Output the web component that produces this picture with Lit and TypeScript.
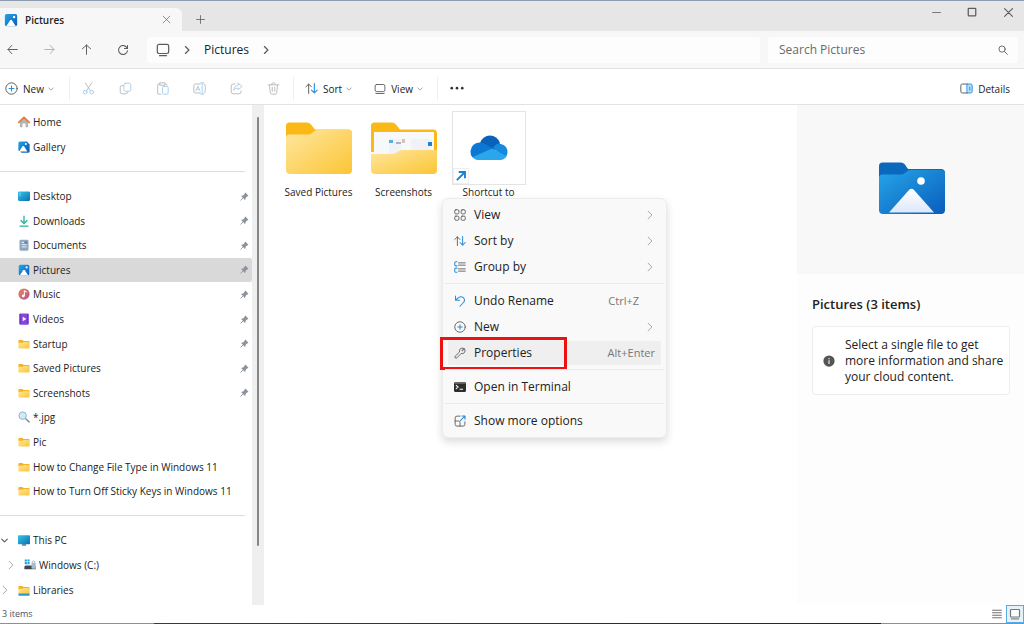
import { LitElement, html, css, svg, nothing, TemplateResult } from "lit";
import { customElement, state } from "lit/decorators.js";
import { classMap } from "lit/directives/class-map.js";

const icon = (size: number, body: unknown, box = 16) => html`
  <svg class="icon" width=${size} height=${size} viewBox="0 0 ${box} ${box}" aria-hidden="true">${body}</svg>`;

const line = (d: string, cls = "ink") => svg`<path class=${cls} d=${d} />`;

const chevronRight = icon(10, line("M5.500 2.500 L11 8 L5.500 13.500", "ink bold"));
const chevronThin = icon(10, line("M5 2 L11 8 L5 14", "soft"));
const chevronDown = icon(6, line("M2 5 L8 11 L14 5", "soft bold"));
const sortGlyph = svg`${line("M4.500 14 V2.500 M1 6 L4.500 2.500 L8 6", "ink")}${line("M11.500 2 V13.500 M8 10 L11.500 13.500 L15 10", "blue thick")}`;
const plusCircle = svg`<circle class="ink" cx="8" cy="8" r="7" />${line("M8 5 V11 M5 8 H11", "blue thick")}`;

const pictureGlyph = svg`
  <rect x="1" y="1" width="14" height="14" rx="2" fill="url(#sky)" />
  <path d="M2.500 15 L7 8.200 Q8 7 9 8.200 L13.500 15 Z" fill="#fff" />
  <circle cx="11.500" cy="4.500" r="1.400" fill="#fff" />`;

const folderGlyph = svg`
  <path d="M0.500 4 Q0.500 2.500 2 2.500 H6 L7.500 4 H14 Q15.500 4 15.500 5.500 V7 H0.500 Z" fill="#f5b21c" />
  <path d="M0.500 6.200 H6 L7.500 5.200 H14.200 Q15.500 5.200 15.500 6.500 V12.700 Q15.500 14 14.200 14 H1.800 Q0.500 14 0.500 12.700 Z" fill="url(#sun)" />`;

const glyphs: Record<string, TemplateResult> = {
  home: svg`
    <path d="M2.500 7 L8 2.500 L13.500 7 V15 H10 V10 H6 V15 H2.500 Z" fill="#b3b6ba" />
    <path d="M1 8.500 L8 1.800 L15 8.500" fill="none" stroke="#e8792e" stroke-width="2.200" stroke-linejoin="round" stroke-linecap="round" />`,
  gallery: svg`
    <rect x="3.500" y="3" width="12" height="12.500" rx="2" fill="#1467b8" />
    <rect x="0.500" y="0.500" width="13" height="13" rx="2" fill="url(#sky)" />
    <path d="M1.500 14 L6 7 Q7 6 8 7 L12.500 14 Z" fill="#fff" />
    <circle cx="10.500" cy="4" r="1.300" fill="#fff" />`,
  desktop: svg`
    <rect x="0" y="2" width="16" height="12.500" rx="1.500" fill="url(#teal)" />
    <path d="M2 4.500 h1.500 M2 7 h1.500" stroke="#b8f1ff" stroke-width="1.200" />`,
  downloads: svg`<path d="M8 1 V11 M3.500 7 L8 11.300 L12.500 7 M2 14.800 H14" fill="none" stroke="#2eb398" stroke-width="1.800" />`,
  documents: svg`
    <rect x="2" y="1" width="12" height="14.500" rx="1.500" fill="#8fa6c1" />
    <path d="M5 4.500 H8 M5 7.500 H11.500 M5 10.500 H11.500" stroke="#eaf2fb" stroke-width="1.300" />
    <rect x="9" y="3.500" width="3" height="2.500" fill="#54769f" />`,
  pictures: pictureGlyph,
  music: svg`
    <circle cx="8" cy="8" r="7.500" fill="url(#rose)" />
    <path d="M8.500 10.500 V3.800 L11.500 5.300" fill="none" stroke="#fff" stroke-width="1.400" />
    <circle cx="7" cy="10.700" r="1.900" fill="#fff" />`,
  videos: svg`
    <rect x="1.500" y="0.500" width="13" height="15" rx="1.500" fill="#8748d8" />
    <path d="M3.500 2 V14.500 M12.700 2 V14.500" stroke="#5a22a8" stroke-width="1.300" stroke-dasharray="1.500 1.500" />
    <path d="M6.300 5 L11 8 L6.300 11 Z" fill="#fff" />`,
  folder: folderGlyph,
  search: svg`
    <path d="M10 10 L14.800 14.500" stroke="#8a8f96" stroke-width="2" stroke-linecap="round" />
    <circle cx="6.200" cy="6.200" r="5" fill="#cfe9fa" stroke="#8db4d0" stroke-width="1.300" />`,
  pc: svg`
    <path d="M5 15.500 H11 L10 13 H6 Z" fill="#6b7f92" />
    <rect x="0" y="1.500" width="16" height="12" rx="1" fill="url(#teal)" />`,
  drive: svg`
    <path d="M1 0.500 h2.800 v2.800 h-2.800 Z M4.600 0.500 h2.800 v2.800 h-2.800 Z M1 4.100 h2.800 v2.800 h-2.800 Z M4.600 4.100 h2.800 v2.800 h-2.800 Z" fill="#1ba0ea" />
    <path d="M2 8.500 H14 L15.500 10 V13.500 H0.500 V10 Z" fill="#42474d" />
    <rect x="10" y="5" width="5.500" height="8" rx="1" fill="#a9bccb" />
    <path d="M11 5 V3.500 Q12.700 1.500 14.400 3.500 V5" fill="none" stroke="#8ba0b1" />`,
  libraries: svg`${folderGlyph}<rect x="0.500" y="12.500" width="15" height="3" rx="1" fill="#2f9bc4" />`,
};

const pin = icon(9, svg`
  <path d="M9.500 1 L15 6.500 L13.500 8 L12.800 7.600 L9.800 10.600 Q10.300 13 8.800 14 L2 7.200 Q3.500 5.700 5.600 6.200 L8.400 3.300 L8 2.500 Z" fill="#8a929b" />
  <path d="M5.500 10.500 L1 15" stroke="#8a929b" stroke-width="1.600" />`);

interface Place {
  label: string;
  glyph: string;
  pinned?: boolean;
  arrow?: "open" | "closed";
  nested?: boolean;
}

const places: (Place | null)[] = [
  { label: "Home", glyph: "home" },
  { label: "Gallery", glyph: "gallery" },
  null,
  { label: "Desktop", glyph: "desktop", pinned: true },
  { label: "Downloads", glyph: "downloads", pinned: true },
  { label: "Documents", glyph: "documents", pinned: true },
  { label: "Pictures", glyph: "pictures", pinned: true },
  { label: "Music", glyph: "music", pinned: true },
  { label: "Videos", glyph: "videos", pinned: true },
  { label: "Startup", glyph: "folder", pinned: true },
  { label: "Saved Pictures", glyph: "folder", pinned: true },
  { label: "Screenshots", glyph: "folder", pinned: true },
  { label: "*.jpg", glyph: "search" },
  { label: "Pic", glyph: "folder" },
  { label: "How to Change File Type in Windows 11", glyph: "folder" },
  { label: "How to Turn Off Sticky Keys in Windows 11", glyph: "folder" },
  null,
  { label: "This PC", glyph: "pc", arrow: "open" },
  { label: "Windows (C:)", glyph: "drive", arrow: "closed", nested: true },
  { label: "Libraries", glyph: "libraries", arrow: "closed" },
];

interface Command {
  label: string;
  glyph: TemplateResult;
  keys?: string;
  submenu?: boolean;
  marked?: boolean;
}

const commands: (Command | null)[] = [
  {
    label: "View", submenu: true,
    glyph: svg`<g class="ink"><rect x="1" y="1" width="5.500" height="5.500" rx="1.500" /><rect x="9.500" y="1" width="5.500" height="5.500" rx="1.500" /><rect x="1" y="9.500" width="5.500" height="5.500" rx="1.500" /><rect x="9.500" y="9.500" width="5.500" height="5.500" rx="1.500" /></g>`,
  },
  { label: "Sort by", submenu: true, glyph: sortGlyph },
  {
    label: "Group by", submenu: true,
    glyph: svg`${line("M4 1 H2.500 Q1 1 1 2.500 V5 Q1 6.500 2.500 6.500 H4 M4 9.500 H2.500 Q1 9.500 1 11 V13.500 Q1 15 2.500 15 H4", "blue thick")}${line("M6 2.500 H15 M6 5.500 H15 M6 10.500 H15 M6 13.500 H15")}`,
  },
  null,
  { label: "Undo Rename", keys: "Ctrl+Z", glyph: line("M2 1.500 V7 H7.500 M2 7 L6 3.500 Q9.500 1 12.500 3.500 Q15.500 7 12.500 10 L8 15", "blue thick") },
  { label: "New", submenu: true, glyph: plusCircle },
  {
    label: "Properties", keys: "Alt+Enter", marked: true,
    glyph: line("M13.800 2.600 L11 5.300 L10.700 5.200 L10.500 4.900 L13.200 2 Q10.500 0.500 8.300 2.500 Q6.600 4.300 7.400 6.700 L1.600 12.200 Q0.600 13.400 1.600 14.500 Q2.700 15.400 3.900 14.400 L9.400 8.700 Q12 9.400 13.800 7.600 Q15.500 5.500 14.300 3 Z"),
  },
  null,
  {
    label: "Open in Terminal",
    glyph: svg`<rect x="0" y="1.500" width="16" height="13" rx="1.500" fill="#2e2e2e" /><path d="M2.500 5.500 L5.500 8 L2.500 10.500 M7.500 11 H12" fill="none" stroke="#fff" stroke-width="1.400" /><path d="M1 3 H15" stroke="#8b8b8b" />`,
  },
  null,
  {
    label: "Show more options",
    glyph: svg`${line("M8 1.500 H4 Q1.500 1.500 1.500 4 V12.500 Q1.500 14.800 4 14.800 H12 Q14.500 14.800 14.500 12.500 V9 M1.500 8 H6 Q8 8 8 10 V14.800")}${line("M8.500 7.500 L14.500 1.500 M10.500 1.300 H14.700 V5.500", "blue thick")}`,
  },
];

const fileTools: [string, TemplateResult][] = [
  ["Cut", svg`${line("M4 1 L10.500 11 M12 1 L5.500 11")}<g class="blue"><circle cx="4" cy="12.500" r="2.300" /><circle cx="12" cy="12.500" r="2.300" /></g>`],
  ["Copy", svg`${line("M5 4.500 H3.500 Q1.500 4.500 1.500 6.500 V12.500 Q1.500 14.500 3.500 14.500 H8.500 Q10.500 14.500 10.500 12.500")}<rect class="blue" x="6" y="1.500" width="8.500" height="10" rx="2" />`],
  ["Paste", svg`${line("M5 2.500 H3.500 Q2 2.500 2 4 V13.500 Q2 15 3.500 15 H6 M11 2.500 H12 Q13.500 2.500 13.500 4 M5 1 H11 V4 H5 Z")}<rect class="blue" x="8" y="5.500" width="7" height="9.500" rx="1.500" />`],
  ["Rename", svg`${line("M9 2.500 H3 Q1 2.500 1 4.500 V11.500 Q1 13.500 3 13.500 H9 M13.500 2.500 Q15 2.800 15 4.500 V11.500 Q15 13.200 13.500 13.500")}${line("M3.500 11 L6 5 L8.500 11 M4.500 9 H7.500 M11.300 1 V15 M9.500 1 H13 M9.500 15 H13", "blue")}`],
  ["Share", svg`${line("M6 2.500 H4 Q1.500 2.500 1.500 5 V12 Q1.500 14.500 4 14.500 H11 Q13.500 14.500 13.500 12 V11")}${line("M10 1.500 L15 5.500 L10 9.500 V7.300 Q6 7.300 4.500 10.500 Q4.800 4.500 10 3.800 Z", "blue")}`],
  ["Delete", svg`${line("M1.500 3.500 H14.500 M5.500 3 Q5.500 1 8 1 Q10.500 1 10.500 3 M3 3.500 L4 13 Q4.200 15 6 15 H10 Q11.800 15 12 13 L13 3.500 M6.500 6.500 V11.500 M9.500 6.500 V11.500")}`],
];

const bigFolder = (thumbnail: boolean) => html`
  <svg width="66" height="52" viewBox="0 0 66 52" aria-hidden="true">
    <path d="M0 4 Q0 0.500 3.500 0.500 H21 Q23 0.500 24.500 2 L29 7.500 H62 Q66 7.500 66 11.500 V30 H0 Z" fill="#fbb917" />
    ${thumbnail
      ? svg`
        <rect x="3" y="10" width="60" height="28" fill="#f7f8fa" />
        <path d="M18 17 H30 V34 H18 Z M40 17 H60 V28 H40 Z" fill="#f0f2f5" />
        <rect x="18" y="18" width="4" height="3" fill="#5aabe2" /><rect x="25" y="20" width="5" height="2" fill="#a4b4c6" />
        <rect x="31" y="17" width="3" height="4" fill="#e2bdb3" /><rect x="57" y="20" width="4" height="4" fill="#1b84d8" />
        <path d="M0 32 H21 Q23 32 25 31 L28 29 Q30 28 32 28 H66 V48 Q66 52 62 52 H4 Q0 52 0 48 Z" fill="url(#sun)" />`
      : svg`<path d="M0 16 Q0 12.500 3.500 12.500 H22 Q24 12.500 26 11 L28.500 9 Q30 8 32 8 H62 Q66 8 66 12 V48 Q66 52 62 52 H4 Q0 52 0 48 Z" fill="url(#sun)" />`}
  </svg>`;

const shortcutThumb = html`
  <span class="thumb">
    <svg width="38" height="26" viewBox="0 0 38 26" aria-hidden="true">
      <path d="M10 8 Q13 0.500 20 0.500 Q27 0.500 30 8 L24 17 L8 13 Z" fill="#0a61b8" />
      <path d="M9 25 Q0 24 0.500 16 Q1.500 8 9.500 7.500 Q14 7.500 17 10 L26 15 L9 25 Z" fill="#0d78d4" />
      <path d="M23 13 Q26 7.500 31 9 Q38 11 37.500 18 Q37 21 35 23 Z" fill="#1789dc" />
      <path d="M3 22 L22 13.500 L36.500 21 Q34.500 25 30 25 H9 Q5 25 3 22 Z" fill="#2aa7ec" />
    </svg>
    <span class="badge">${icon(12, svg`<path d="M2.500 13.500 L12 4 M5 2.700 H13.300 V11" fill="none" stroke="#1283d6" stroke-width="2.500" />`)}</span>
  </span>`;

const files = [
  { label: "Saved Pictures", art: bigFolder(false) },
  { label: "Screenshots", art: bigFolder(true) },
  { label: "Shortcut to", art: shortcutThumb },
];

@customElement("app-root")
export class AppRoot extends LitElement {
  @state() private selected = "Pictures";

  static styles = css`
    :host {
      display: flex;
      flex-direction: column;
      min-height: 100vh;
      box-sizing: border-box;
      border-top: 1px solid #8d9db0;
      background: #fff;
      color: #222;
      font: 10px/16px "Open Sans", "Noto Sans", sans-serif;
    }
    * { box-sizing: border-box; }
    button, input {
      font: inherit;
      color: inherit;
      background: none;
      border: 0;
      padding: 0;
      margin: 0;
    }
    button { display: flex; align-items: center; justify-content: center; white-space: nowrap; }
    a { color: inherit; text-decoration: none; }
    h2, p, ul { margin: 0; padding: 0; list-style: none; }
    svg { display: block; flex: none; }
    .defs { position: absolute; }
    .ink, .soft, .blue { fill: none; stroke-linecap: round; stroke-linejoin: round; stroke-width: 1.200; }
    .ink { stroke: #5c5c5c; }
    .soft { stroke: #8a8a8a; }
    .blue { stroke: #2a8fdc; }
    .thick { stroke-width: 1.400; }
    .bold { stroke-width: 2; }

    .titlebar { display: flex; height: 30px; background: #e6e6e6; }
    .tab {
      display: flex;
      align-items: center;
      width: 182px;
      margin-top: 7px;
      padding: 0 10px 0 4px;
      gap: 7px;
      background: #f7f7f7;
      border-radius: 0 6px 0 0;
      font-weight: 600;
    }
    .tab span { flex: 1; }
    .tab button { width: 12px; height: 16px; }
    .newtab { width: 36px; margin-top: 7px; }
    .window { display: flex; gap: 4px; margin-left: auto; }
    .window button { width: 32px; height: 22px; }

    .navbar {
      display: flex;
      align-items: center;
      height: 38px;
      padding-right: 6px;
      background: #f7f7f7;
      border-bottom: 1px solid #e3e3e3;
      font-size: 12px;
    }
    .moves { display: flex; gap: 13px; width: 147px; }
    .moves button { width: 24px; height: 24px; }
    .moves button:disabled { opacity: 0.45; }
    .address, .search { display: flex; align-items: center; height: 26px; background: #fdfdfd; border-radius: 3px; }
    .address { flex: 1; gap: 12px; padding-left: 9px; }
    .search { width: 250px; margin-left: 8px; padding: 0 10px 0 11px; }
    .search input { flex: 1; min-width: 0; outline: 0; }
    .search input::placeholder { color: #6a6a6a; opacity: 1; }

    .toolbar {
      display: flex;
      align-items: center;
      height: 36px;
      padding: 4px 14px 0 5px;
      background: #fff;
      border-bottom: 1px solid #e3e3e3;
    }
    .toolbar .drop { gap: 5px; height: 24px; }
    .toolbar .drop .icon:last-child { margin-left: -1px; }
    .rule { width: 1px; height: 24px; background: #f0f0f0; }
    .tools { display: flex; flex: none; gap: 13px; margin: 0 8px 0 6px; opacity: 0.4; }
    .tools button { width: 24px; height: 24px; }
    .drops { display: flex; gap: 22px; margin: 0 14px 0 11px; }
    .first { width: 64px; justify-content: flex-start; }
    .more { width: 38px; height: 24px; }
    .details { gap: 5px; margin-left: auto; }

    .body { display: flex; flex: 1; min-height: 0; }
    .side { display: flex; flex: none; width: 264px; }
    .places {
      display: grid;
      flex: 1;
      grid-auto-rows: minmax(24px, 1fr);
      padding: 5px 0 3px;
    }
    .places li { display: grid; min-width: 0; }
    .places a { display: flex; align-items: center; gap: 3px; padding: 0 3px 0 0; white-space: nowrap; border-radius: 0 2px 2px 0; }
    .places .selected { background: #d9d9d9; }
    .places .name { flex: 1; }
    .arrow { display: flex; width: 15px; }
    .nested .arrow { width: 21px; padding-left: 6px; }
    .places .divider { align-self: center; height: 1px; margin-right: 7px; background: #dedede; }
    .track { display: flex; justify-content: center; width: 12px; padding-top: 12px; background: #efefef; }
    .thumbbar { width: 2px; height: 88%; background: #868686; border-radius: 1px; }

    .content { position: relative; flex: 1; min-width: 0; }
    .files { display: flex; flex-wrap: wrap; padding: 6px 0 0 12px; }
    .file { display: flex; flex-direction: column; align-items: center; width: 85px; }
    .art { display: flex; align-items: center; justify-content: center; height: 73px; }
    .thumb {
      position: relative;
      display: flex;
      align-items: center;
      justify-content: center;
      width: 74px;
      height: 74px;
      border: 1px solid #e4e4e4;
    }
    .badge { position: absolute; left: 0; bottom: 0; padding: 1px; background: #fff; border: 1px solid #eee; }

    .menu {
      position: absolute;
      left: 178px;
      top: 93px;
      width: 225px;
      padding: 3px 4px;
      background: #f9f9f9;
      border: 1px solid #ececec;
      border-radius: 6px;
      box-shadow: 0 4px 8px rgba(0, 0, 0, 0.14);
      font-size: 12px;
    }
    .menu li { position: relative; }
    .menu .cut { height: 8px; padding-top: 3px; }
    .menu .cut::after { content: ""; display: block; height: 1px; margin: 0 -2px; background: #ebebeb; }
    .command { width: 100%; height: 26px; padding: 0 6px; gap: 8px; border: 1px solid transparent; border-radius: 3px; background-clip: padding-box; }
    .command .name { flex: 1; text-align: left; }
    .command.marked { background-color: #efefef; }
    .keys { font-size: 11px; color: #777; }
    .keys.short { margin-right: 16px; }
    .frame { position: absolute; left: -7px; top: -3px; width: 127px; height: 33px; border: 3px solid #ee1111; pointer-events: none; }

    .pane { flex: none; width: 227px; background: #fdfdfd; }
    .preview { display: flex; align-items: center; justify-content: center; height: 169px; padding: 0 0 4px 2px; background: #f8f8f8; }
    .pane h2 { padding: 21px 15px 0; font-size: 13px; line-height: 18px; font-weight: 600; }
    .card {
      display: flex;
      align-items: center;
      gap: 10px;
      margin: 13px 14px 0 15px;
      padding: 10px 3px 9px 10px;
      border: 1px solid #ededed;
      border-radius: 4px;
      background: #fff;
      font-size: 12px;
    }

    .status {
      display: flex;
      align-items: center;
      height: 19px;
      padding: 0 0 1px 2px;
      background: linear-gradient(90deg, #8590a3 15%, #1b3f7a 15%, #1b2450 86%, #8590a3 86%) bottom / 100% 1px no-repeat;
      color: #44546c;
      font-size: 9px;
    }
    .modes { display: flex; margin-left: auto; }
    .modes button { width: 18px; height: 18px; }
    .modes .on { background: #e5f2fb; border: 1px solid #5aaae4; }
  `;

  private place(item: Place | null) {
    if (!item) return html`<li class="divider" role="separator"></li>`;
    const active = item.label === this.selected;
    return html`
      <li>
        <a href="#" class=${classMap({ selected: active, nested: !!item.nested })}
          aria-current=${active ? "page" : nothing}
          @click=${(e: Event) => { e.preventDefault(); this.selected = item.label; }}>
          <span class="arrow">${item.arrow === "open"
            ? icon(9, line("M3 5.500 L8 10.500 L13 5.500", "ink bold"))
            : item.arrow ? chevronThin : nothing}</span>
          ${icon(12, glyphs[item.glyph])}
          <span class="name">${item.label}</span>
          ${item.pinned ? pin : nothing}
        </a>
      </li>`;
  }

  private command(item: Command | null) {
    if (!item) return html`<li class="cut" role="separator"></li>`;
    return html`
      <li role="none">
        <button role="menuitem" class=${classMap({ command: true, marked: !!item.marked })}>
          ${icon(12, item.glyph)}
          <span class="name">${item.label}</span>
          ${item.keys ? html`<span class=${classMap({ keys: true, short: !item.marked })}>${item.keys}</span>` : nothing}
          ${item.submenu ? chevronThin : nothing}
        </button>
        ${item.marked ? html`<span class="frame"></span>` : nothing}
      </li>`;
  }

  render() {
    return html`
      <svg class="defs" width="0" height="0" aria-hidden="true">
        <linearGradient id="sky" x1="0" y1="0" x2="1" y2="1"><stop offset="0" stop-color="#25a5e8" /><stop offset="1" stop-color="#0a5dbb" /></linearGradient>
        <linearGradient id="sun" x1="0" y1="0" x2="1" y2="1"><stop offset="0" stop-color="#ffe7a0" /><stop offset="1" stop-color="#fbc534" /></linearGradient>
        <linearGradient id="teal" x1="0" y1="0" x2="1" y2="1"><stop offset="0" stop-color="#36c5e4" /><stop offset="1" stop-color="#0b6fb5" /></linearGradient>
        <linearGradient id="rose" x1="0" y1="0" x2="1" y2="1"><stop offset="0" stop-color="#f08350" /><stop offset="1" stop-color="#b2568f" /></linearGradient>
        <linearGradient id="snow" x1="0" y1="0" x2="0" y2="1"><stop offset="0" stop-color="#fff" /><stop offset="1" stop-color="#dce8fa" /></linearGradient>
      </svg>

      <header class="titlebar">
        <div class="tab">
          ${icon(14, pictureGlyph)}
          <span>Pictures</span>
          <button aria-label="Close tab">${icon(9, line("M2 2 L14 14 M14 2 L2 14"))}</button>
        </div>
        <button class="newtab" aria-label="New tab">${icon(9, line("M8 1 V15 M1 8 H15", "ink thick"))}</button>
        <div class="window">
          <button aria-label="Minimize">${icon(9, line("M1 8 H15", "ink thick"))}</button>
          <button aria-label="Maximize">${icon(10, svg`<rect class="ink bold" x="2" y="2" width="12" height="12" rx="1" />`)}</button>
          <button aria-label="Close">${icon(9, line("M1 1 L15 15 M15 1 L1 15", "ink bold"))}</button>
        </div>
      </header>

      <nav class="navbar">
        <div class="moves">
          <button aria-label="Back">${icon(11, line("M15 8 H1.500 M7 2 L1.500 8 L7 14", "ink thick"))}</button>
          <button aria-label="Forward" disabled>${icon(11, line("M1 8 H14.500 M9 2 L14.500 8 L9 14", "ink thick"))}</button>
          <button aria-label="Up">${icon(11, line("M8 15 V1.500 M2 7 L8 1.500 L14 7", "ink thick"))}</button>
          <button aria-label="Refresh">${icon(12, line("M13.500 5.500 A6 6 0 1 0 14 9 M14 2 V6 H10", "ink thick"))}</button>
        </div>
        <div class="address">
          ${icon(14, svg`<rect class="ink thick" x="1.500" y="1.500" width="13" height="10.500" rx="2" />${line("M4 14.500 H12", "ink thick")}`)}
          ${chevronRight}
          <span>Pictures</span>
          ${chevronRight}
        </div>
        <label class="search">
          <input type="text" aria-label="Search Pictures" placeholder="Search Pictures" />
          ${icon(10, svg`<circle class="ink thick" cx="6.500" cy="6.500" r="5" />${line("M10.500 10.500 L15 15", "ink thick")}`)}
        </label>
      </nav>

      <div class="toolbar">
        <button class="drop first">${icon(13, plusCircle)}<span>New</span>${chevronDown}</button>
        <span class="rule"></span>
        <div class="tools">
          ${fileTools.map(([label, glyph]) => html`<button disabled aria-label=${label}>${icon(13, glyph)}</button>`)}
        </div>
        <span class="rule"></span>
        <div class="drops">
          <button class="drop">${icon(13, sortGlyph)}<span>Sort</span>${chevronDown}</button>
          <button class="drop">${icon(12, svg`<rect class="ink" x="1.500" y="2" width="13" height="9.500" rx="2" />${line("M2.500 14 H13.500")}`)}<span>View</span>${chevronDown}</button>
        </div>
        <span class="rule"></span>
        <button class="more" aria-label="See more">${icon(14, svg`<g fill="#333"><circle cx="2" cy="7" r="1.500" /><circle cx="8" cy="7" r="1.500" /><circle cx="14" cy="7" r="1.500" /></g>`)}</button>
        <button class="details">
          ${icon(13, svg`<path d="M9 2.500 H13 Q15 2.500 15 4.500 V11.500 Q15 13.500 13 13.500 H9 Z" fill="#b9e0fb" /><path class="ink" d="M9 2.500 H3 Q1 2.500 1 4.500 V11.500 Q1 13.500 3 13.500 H9" />${line("M9 2.500 H13 Q15 2.500 15 4.500 V11.500 Q15 13.500 13 13.500 H9 Z M12 6 V10", "blue")}`)}
          <span>Details</span>
        </button>
      </div>

      <div class="body">
        <aside class="side">
          <ul class="places">${places.map((p) => this.place(p))}</ul>
          <div class="track"><span class="thumbbar"></span></div>
        </aside>

        <main class="content">
          <div class="files">
            ${files.map((f) => html`<button class="file"><span class="art">${f.art}</span><span>${f.label}</span></button>`)}
          </div>
          <ul class="menu" role="menu">${commands.map((c) => this.command(c))}</ul>
        </main>

        <aside class="pane">
          <div class="preview">
            <svg width="66" height="52" viewBox="0 0 66 52" aria-hidden="true">
              <path d="M0 4 Q0 0.500 3.500 0.500 H22 Q24 0.500 25.500 2 L29 7 H62 Q66 7 66 11 V30 H0 Z" fill="#0a68bd" />
              <path d="M0 16 Q0 12.500 3.500 12.500 H22 Q24 12.500 26 11 L28.500 9 Q30 8 32 8 H62 Q66 8 66 12 V48 Q66 52 62 52 H4 Q0 52 0 48 Z" fill="url(#sky)" />
              <path d="M10 50.500 L30 28 Q32.500 25.500 35 28 L55 50.500 Z" fill="url(#snow)" />
              <circle cx="42" cy="19" r="3.800" fill="#fff" />
            </svg>
          </div>
          <h2>Pictures (3 items)</h2>
          <div class="card">
            ${icon(12, svg`<circle cx="8" cy="8" r="7.500" fill="#555" /><path d="M8 7 V12 M8 4 V5.500" stroke="#fff" stroke-width="1.400" />`)}
            <p>Select a single file to get more information and share your cloud content.</p>
          </div>
        </aside>
      </div>

      <footer class="status">
        <span>3 items</span>
        <div class="modes">
          <button aria-label="Details view">${icon(10, line("M1 2 H15 M1 6 H15 M1 10 H15 M1 14 H15", "ink thick"))}</button>
          <button class="on" aria-label="Large icons view">${icon(12, svg`<rect x="2" y="2" width="12" height="10" rx="1" fill="#fff" stroke="#777" stroke-width="1.600" />${line("M3 14.500 H13", "soft thick")}`)}</button>
        </div>
      </footer>`;
  }
}
